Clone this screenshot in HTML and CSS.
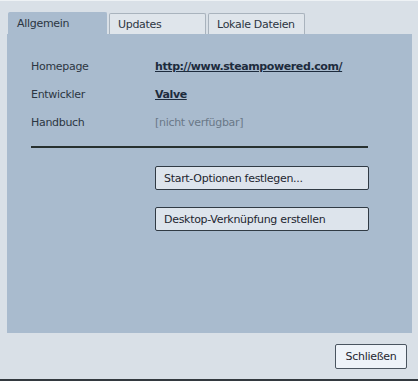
FILE: index.html
```html
<!DOCTYPE html>
<html lang="de">
<head>
  <meta charset="UTF-8">
  <title>Eigenschaften</title>
  <link rel="stylesheet" href="styles.css">
</head>
<body>
  <div class="dialog">
    <!-- Tabs -->
    <div class="tabs">
      <div class="tab active">Allgemein</div>
      <div class="tab">Updates</div>
      <div class="tab">Lokale Dateien</div>
    </div>

    <!-- Panel -->
    <div class="panel">
      <div class="info">
        <div class="row">
          <span class="label">Homepage</span>
          <a class="value link" href="#">http://www.steampowered.com/</a>
        </div>
        <div class="row">
          <span class="label">Entwickler</span>
          <a class="value link" href="#">Valve</a>
        </div>
        <div class="row">
          <span class="label">Handbuch</span>
          <span class="value na">[nicht verfügbar]</span>
        </div>
      </div>
      <div class="divider"></div>
      <div class="actions">
        <button class="btn">Start-Optionen festlegen...</button>
        <button class="btn">Desktop-Verknüpfung erstellen</button>
      </div>
    </div>

    <div class="footer">
      <button class="btn close">Schließen</button>
    </div>
  </div>
  <div class="taskbar"></div>
</body>
</html>
```

FILE: styles.css
```css
body {
  margin: 0;
  width: 418px;
  height: 381px;
  background: #d9e0e7;
  font-family: "DejaVu Sans", Verdana, sans-serif;
  font-size: 11px;
  color: #2c3642;
  overflow: hidden;
  display: flex;
  flex-direction: column;
}

.dialog {
  flex: 1;
  display: flex;
  flex-direction: column;
  padding: 11px 6px 0 7px;
  border-top: 1px solid #eef2f5;
}

/* Tabs */
.tabs {
  display: flex;
  gap: 2px;
  padding-left: 1px;
  height: 22px;
}

.tab {
  width: 97px;
  margin-top: 1px;
  padding: 4px 0 0 8px;
  box-sizing: border-box;
  background: #dfe5eb;
  border: 1px solid #a9b3bd;
  border-bottom: none;
  border-radius: 2px 2px 0 0;
  letter-spacing: -0.3px;
}

.tab.active {
  width: 99px;
  margin-top: 0;
  background: #a9bbce;
  border-color: #a9bbce;
}

/* Panel */
.panel {
  height: 299px;
  background: #a9bbce;
  padding: 0 24px;
}

.info {
  display: flex;
  flex-direction: column;
  gap: 14px;
  padding-top: 25px;
}

.row {
  display: flex;
  align-items: center;
  height: 14px;
}

.label {
  width: 124px;
  letter-spacing: -0.3px;
}

.link {
  color: #1d2b3d;
  font-weight: bold;
  text-decoration: underline;
  letter-spacing: -0.4px;
}

.na {
  color: #6a7888;
  letter-spacing: -0.3px;
}

.divider {
  height: 2px;
  width: 337px;
  margin-top: 17px;
  background: #27302f;
}

.actions {
  display: flex;
  flex-direction: column;
  gap: 17px;
  padding: 18px 0 0 124px;
}

.btn {
  height: 24px;
  width: 214px;
  text-align: left;
  padding: 0 0 0 8px;
  font-family: inherit;
  font-size: 11px;
  color: #1e2630;
  letter-spacing: -0.3px;
  background: #dde4ec;
  border: 1px solid #303a44;
  border-radius: 2px;
}

.footer {
  display: flex;
  justify-content: flex-end;
  padding: 11px 5px 0 0;
}

.btn.close {
  width: 72px;
  height: 25px;
  text-align: center;
  padding: 0;
  background: #eef3f9;
  border-color: #4a5560;
}

.taskbar {
  height: 2px;
  background: #33393f;
}
```
